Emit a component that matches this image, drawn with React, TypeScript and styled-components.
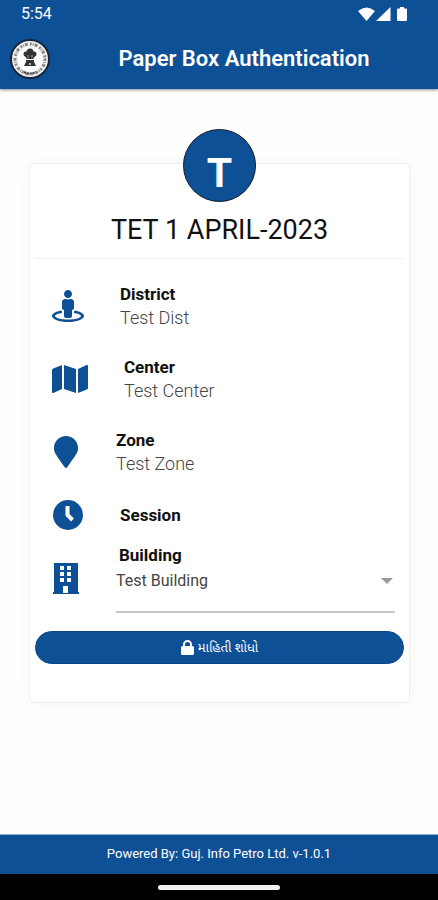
import React from "react";
import styled, { createGlobalStyle } from "styled-components";
import { FaMap, FaMapMarker, FaStreetView } from "react-icons/fa";

const BLUE = "#0e5096";

const GlobalStyle = createGlobalStyle`
  * { box-sizing: border-box; }
  body {
    margin: 0;
    background: #fefefe;
    color: #111;
    font-family: Roboto, "Noto Sans", sans-serif;
  }
`;

const Screen = styled.div`
  display: flex;
  flex-direction: column;
  min-height: 100vh;
`;

const TopBar = styled.header`
  background: ${BLUE};
  color: #fff;
  box-shadow: 0 1px 3px rgba(0, 0, 0, 0.45);
`;

const StatusBar = styled.div`
  display: flex;
  align-items: center;
  justify-content: space-between;
  height: 28px;
  padding: 0 30px 0 21px;
  font-size: 16px;
  line-height: 28px;
`;

const StatusIcons = styled.svg`
  display: block;
  width: 50px;
  height: 16px;
  fill: #fff;
`;

const TitleBar = styled.div`
  display: flex;
  align-items: center;
  height: 61px;
  padding-left: 10px;
`;

const Emblem = styled.svg`
  flex: none;
  width: 40px;
  height: 40px;
`;

const Title = styled.h1`
  flex: 1;
  margin: 0;
  text-align: center;
  font-size: 22px;
  font-weight: 600;
  line-height: 30px;
`;

const Main = styled.main`
  flex: 1;
  padding: 74px 28px 32px 29px;
`;

const Card = styled.section`
  display: flex;
  flex-direction: column;
  padding: 0 5px 38px;
  background: #fff;
  border: 1px solid #efefef;
  border-radius: 4px;
  box-shadow: 0 0 16px rgba(0, 0, 0, 0.04);
`;

const Avatar = styled.div`
  align-self: center;
  width: 73px;
  height: 73px;
  margin-top: -35px;
  padding-top: 8px;
  border: 1px solid #101820;
  border-radius: 50%;
  background: ${BLUE};
  color: #fff;
  text-align: center;
  font-size: 41px;
  font-weight: 700;
  line-height: 70px;
`;

const ExamName = styled.h2`
  margin: 0;
  padding: 10px 0;
  border-bottom: 1px solid #f0f0f0;
  text-align: center;
  font-size: 27px;
  font-weight: 400;
  line-height: 36px;
`;

const Details = styled.div`
  display: flex;
  flex-direction: column;
  padding: 10px 9px 0 17px;
`;

const DetailRow = styled.div<{ $height: number }>`
  display: flex;
  align-items: center;
  gap: 36px;
  min-height: ${(p) => p.$height}px;
`;

const IconBox = styled.span<{ $width: number }>`
  display: flex;
  flex: none;
  justify-content: center;
  width: ${(p) => p.$width}px;
  color: ${BLUE};

  svg {
    width: 100%;
    height: 32px;
  }
`;

const DetailText = styled.div`
  flex: 1;
  min-width: 0;
`;

const Label = styled.div`
  font-size: 17px;
  font-weight: 700;
  line-height: 23px;
`;

const FieldLabel = styled.label`
  display: block;
  padding: 2px 0 0 3px;
  font-size: 17px;
  font-weight: 700;
  line-height: 23px;
`;

const Value = styled.div`
  color: #444;
  font-size: 18px;
  font-weight: 300;
  line-height: 23px;
`;

const SelectWrap = styled.div`
  display: flex;
  align-items: center;
  height: 46px;
  border-bottom: 2px solid #c8c8c8;
  padding-bottom: 16px;
`;

const Select = styled.select`
  flex: 1;
  min-width: 0;
  padding: 0;
  border: 0;
  appearance: none;
  background: transparent;
  color: #444;
  font-family: inherit;
  font-size: 16px;
  line-height: 24px;
`;

const Caret = styled.svg`
  flex: none;
  width: 12px;
  height: 6px;
  margin-right: 2px;
  fill: #999;
  pointer-events: none;
`;

const SearchButton = styled.button`
  display: flex;
  align-items: center;
  justify-content: center;
  gap: 4px;
  height: 33px;
  margin-top: 18px;
  border: 1px solid #0a448a;
  border-radius: 17px;
  background: ${BLUE};
  color: #fff;
  font-family: Roboto, "Noto Sans Gujarati", "Noto Sans", sans-serif;
  font-size: 13px;
  line-height: 20px;

  svg {
    width: 13px;
    height: 15px;
  }
`;

const Footer = styled.footer`
  height: 40px;
  background: ${BLUE};
  border-top: 1px solid #8fadd0;
  color: #fff;
  text-align: center;
  font-size: 13px;
  line-height: 38px;
`;

const NavigationBar = styled.div`
  display: flex;
  align-items: center;
  justify-content: center;
  height: 26px;
  background: #000;
`;

const HomeHandle = styled.div`
  width: 28%;
  height: 5px;
  border-radius: 3px;
  background: #f2f2f2;
`;

const EmblemLogo = () => (
  <Emblem viewBox="0 0 40 40" aria-hidden="true">
    <circle cx="20" cy="20" r="19" fill="#f4f4f2" stroke="#162638" strokeWidth="2" />
    <circle cx="20" cy="20" r="15" fill="none" stroke="#888" strokeWidth="3" strokeDasharray="2 1 1 1 3 2" />
    <circle cx="20" cy="20" r="12" fill="#fff" />
    <g fill="#333">
      <circle cx="20" cy="13" r="3.500" />
      <circle cx="16" cy="15" r="2.500" />
      <circle cx="24" cy="15" r="2.500" />
      <path d="M14 16h12l-3 4h-6zM16 21h8v2h-8zM16 23h8l2 4H14z" />
    </g>
    <path d="M18 16v3M22 16v3" stroke="#999" />
    <circle cx="20" cy="25" r="1" fill="#ddd" />
    <path d="M14 33q6 3 12 0" fill="none" stroke="#444" strokeWidth="2" strokeDasharray="2 1" />
  </Emblem>
);

const ClockIcon = () => (
  <svg viewBox="0 0 32 32" aria-hidden="true">
    <circle cx="16" cy="16" r="15" fill="currentColor" />
    <path d="M15.500 7v9l5 5" fill="none" stroke="#fff" strokeWidth="4" />
  </svg>
);

const BuildingIcon = () => (
  <svg viewBox="0 0 28 32" aria-hidden="true">
    <path fill="currentColor" d="M2 1h24v29h1v2H1v-2h1z" />
    <path
      fill="#fff"
      d="M8 4h4v4H8zM15 4h4v4h-4zM8 10h4v4H8zM15 10h4v4h-4zM8 16h4v4H8zM15 16h4v4h-4zM11 24h5v7h-5z"
    />
  </svg>
);

const LockIcon = () => (
  <svg viewBox="0 0 13 15" aria-hidden="true">
    <path d="M3 7V4.500a3.500 3.500 0 0 1 7 0V7" fill="none" stroke="#fff" strokeWidth="2" />
    <rect y="6" width="13" height="9" rx="1.500" fill="#fff" />
  </svg>
);

export default function App() {
  return (
    <>
      <GlobalStyle />
      <Screen>
        <TopBar>
          <StatusBar>
            <span>5:54</span>
            <StatusIcons viewBox="0 0 50 16" aria-hidden="true">
              <path d="M0 5Q8.500-2 17 5L8.500 15z" />
              <path d="M18 15L32.500 1v14z" />
              <path d="M42 1h4v1.500h2q1 0 1 1V14q0 1-1 1h-8q-1 0-1-1V3.500q0-1 1-1h2z" />
            </StatusIcons>
          </StatusBar>
          <TitleBar>
            <EmblemLogo />
            <Title>Paper Box Authentication</Title>
          </TitleBar>
        </TopBar>

        <Main>
          <Card>
            <Avatar>T</Avatar>
            <ExamName>TET 1 APRIL-2023</ExamName>
            <Details>
              <DetailRow $height={73}>
                <IconBox $width={32}><FaStreetView /></IconBox>
                <DetailText>
                  <Label>District</Label>
                  <Value>Test Dist</Value>
                </DetailText>
              </DetailRow>
              <DetailRow $height={73}>
                <IconBox $width={36}><FaMap /></IconBox>
                <DetailText>
                  <Label>Center</Label>
                  <Value>Test Center</Value>
                </DetailText>
              </DetailRow>
              <DetailRow $height={73}>
                <IconBox $width={28}><FaMapMarker /></IconBox>
                <DetailText>
                  <Label>Zone</Label>
                  <Value>Test Zone</Value>
                </DetailText>
              </DetailRow>
              <DetailRow $height={54}>
                <IconBox $width={32}><ClockIcon /></IconBox>
                <DetailText>
                  <Label>Session</Label>
                </DetailText>
              </DetailRow>
              <DetailRow $height={70}>
                <IconBox $width={28}><BuildingIcon /></IconBox>
                <DetailText>
                  <FieldLabel htmlFor="building">Building</FieldLabel>
                  <SelectWrap>
                    <Select id="building" defaultValue="test">
                      <option value="test">Test Building</option>
                    </Select>
                    <Caret viewBox="0 0 12 6" aria-hidden="true">
                      <path d="M0 0h12L6 6z" />
                    </Caret>
                  </SelectWrap>
                </DetailText>
              </DetailRow>
            </Details>
            <SearchButton type="button">
              <LockIcon />
              <span>માહિતી શોધો</span>
            </SearchButton>
          </Card>
        </Main>

        <Footer>Powered By: Guj. Info Petro Ltd. v-1.0.1</Footer>
        <NavigationBar>
          <HomeHandle />
        </NavigationBar>
      </Screen>
    </>
  );
}
